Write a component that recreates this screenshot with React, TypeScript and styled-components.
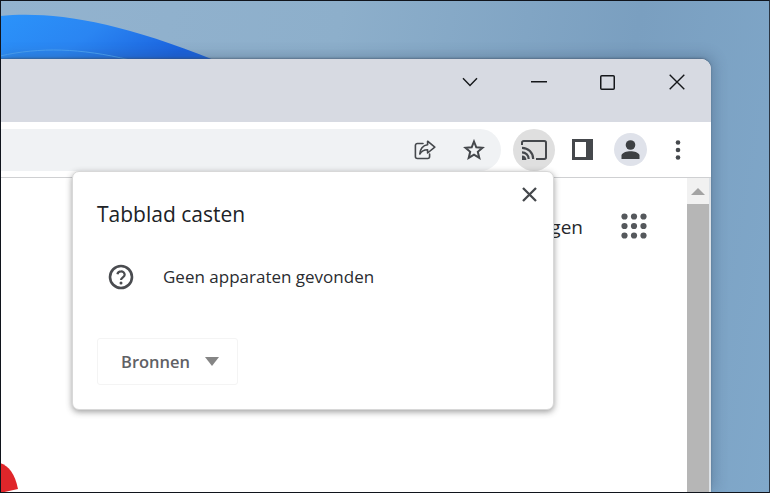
import React from 'react';
import styled, { createGlobalStyle } from 'styled-components';

const GlobalStyle = createGlobalStyle`
  html, body {
    margin: 0;
    padding: 0;
    background: #7fa6c7;
  }
  * {
    box-sizing: border-box;
  }
`;

const Desktop = styled.div`
  position: relative;
  width: 770px;
  height: 493px;
  overflow: hidden;
  padding: 59px 59px 0 0;
  display: flex;
  font-family: 'Open Sans', 'Noto Sans', sans-serif;
  background: linear-gradient(100deg, #93b3cf 0%, #8dafcb 40%, #7a9fc0 75%, #80a8ca 100%);
`;

const Frame = styled.div`
  position: absolute;
  inset: 0;
  border: 1px solid #10141c;
  border-right-color: #2a3644;
  pointer-events: none;
  z-index: 5;
`;

const Swirl = styled.svg`
  position: absolute;
  left: 0;
  top: 0;
`;

const Window = styled.div`
  position: relative;
  flex: 1;
  display: flex;
  flex-direction: column;
  background: #fff;
  border-top-right-radius: 10px;
  overflow: hidden;
`;

const Shadow = styled.div`
  position: absolute;
  left: 0;
  top: 59px;
  width: 711px;
  bottom: 0;
  border-top-right-radius: 10px;
  box-shadow: 3px -3px 14px rgba(50, 70, 100, 0.32), 0 -1px 2px rgba(60, 75, 95, 0.5);
`;

const TitleBar = styled.div`
  height: 63px;
  flex: none;
  display: flex;
  justify-content: flex-end;
  background: #d7dae2;
`;

const CaptionButton = styled.div`
  width: 69px;
  height: 46px;
  display: flex;
  align-items: center;
  justify-content: center;
  color: #15171a;
`;

const Toolbar = styled.div`
  height: 55px;
  flex: none;
  display: flex;
  align-items: center;
  padding-right: 9px;
  background: #fff;
`;

const Omnibox = styled.div`
  flex: 1;
  height: 42px;
  margin-right: 9px;
  display: flex;
  align-items: center;
  justify-content: flex-end;
  gap: 27px;
  padding-right: 16px;
  background: #f0f2f4;
  border-radius: 0 21px 21px 0;
  color: #45484c;
`;

const ToolSlot = styled.div`
  width: 48px;
  height: 42px;
  display: flex;
  align-items: center;
  justify-content: center;
  color: #45484c;
`;

const CastCircle = styled.div`
  width: 42px;
  height: 42px;
  border-radius: 50%;
  display: flex;
  align-items: center;
  justify-content: center;
  background: #dfdfdf;
`;

const Avatar = styled.div`
  width: 33px;
  height: 33px;
  border-radius: 50%;
  display: flex;
  align-items: center;
  justify-content: center;
  background: #dfe2ea;
`;

const Content = styled.div`
  flex: 1;
  min-height: 0;
  display: flex;
  border-top: 1px solid #cfd0d2;
`;

const Page = styled.div`
  flex: 1;
  display: flex;
  align-items: flex-start;
  justify-content: flex-end;
  gap: 40px;
  padding: 35px 40px 0 0;
  background: #fff;
`;

const HeaderLink = styled.span`
  margin: 1px -2px 0 0;
  font-size: 19px;
  line-height: 27px;
  color: #26282b;
`;

const Scrollbar = styled.div`
  width: 24px;
  flex: none;
  display: flex;
  flex-direction: column;
  background: #f1f1f1;
  border-right: 2px solid #dde2e7;
`;

const ScrollArrow = styled.div`
  height: 26px;
  display: flex;
  align-items: center;
  justify-content: center;
  &::before {
    content: '';
    border-left: 7px solid transparent;
    border-right: 7px solid transparent;
    border-bottom: 7px solid #a3a3a3;
  }
`;

const ScrollThumb = styled.div`
  flex: 1;
  background: #b6b6b6;
`;

const Popup = styled.div`
  position: absolute;
  left: 72px;
  top: 112px;
  width: 482px;
  height: 239px;
  z-index: 2;
  padding: 28px 24px 0;
  display: flex;
  flex-direction: column;
  align-items: flex-start;
  background: #fff;
  border: 1px solid #d8d8d8;
  border-radius: 7px;
  box-shadow: 0 2px 6px rgba(40, 40, 40, 0.45);
`;

const CloseButton = styled.div`
  position: absolute;
  top: 12px;
  right: 14px;
  width: 20px;
  height: 20px;
  display: flex;
  align-items: center;
  justify-content: center;
  color: #45484c;
`;

const PopupTitle = styled.div`
  font-size: 21px;
  line-height: 28px;
  color: #202226;
`;

const StatusRow = styled.div`
  display: flex;
  align-items: center;
  gap: 29px;
  margin-top: 36px;
  padding-left: 11px;
`;

const StatusText = styled.span`
  font-size: 17px;
  line-height: 24px;
  color: #2a2c30;
`;

const SourcesButton = styled.div`
  width: 141px;
  height: 47px;
  margin-top: 48px;
  padding: 0 18px 0 23px;
  display: flex;
  align-items: center;
  justify-content: space-between;
  border: 1px solid #f4f4f4;
  border-radius: 3px;
  font-size: 16.5px;
  font-weight: 600;
  color: #5f6165;
  &::after {
    content: '';
    border-left: 7.5px solid transparent;
    border-right: 7.5px solid transparent;
    border-top: 9px solid #858585;
  }
`;

const RedBlob = styled.svg`
  position: absolute;
  left: 0;
  top: 463px;
`;

const Chevron = () => (
  <svg width="16" height="10" viewBox="0 0 16 10" fill="none" stroke="currentColor" strokeWidth="1.4">
    <path d="M1 1.2 8 8.4 15 1.2" />
  </svg>
);

const Minimize = () => (
  <svg width="16" height="2" viewBox="0 0 16 2" fill="currentColor">
    <rect width="16" height="1.5" />
  </svg>
);

const Maximize = () => (
  <svg width="15" height="15" viewBox="0 0 15 15" fill="none" stroke="currentColor" strokeWidth="1.5">
    <rect x="0.75" y="0.75" width="13.5" height="13.5" rx="1" />
  </svg>
);

const CloseLarge = () => (
  <svg width="16" height="16" viewBox="0 0 16 16" fill="none" stroke="currentColor" strokeWidth="1.4">
    <path d="M.7.7 15.3 15.3M15.3.7.7 15.3" />
  </svg>
);

const ShareIcon = () => (
  <svg width="22" height="20" viewBox="0 0 22 20" fill="none" stroke="currentColor" strokeWidth="1.6" strokeLinejoin="round" strokeLinecap="round">
    <path d="M9 3.5H3.4A2 2 0 0 0 1.4 5.5v11a2 2 0 0 0 2 2h10.2a2 2 0 0 0 2-2V14" />
    <path d="M13.6 1.2 20.8 7.2 13.6 13V9.7C10 9.7 7.4 11 5.8 14 6 9.4 8.800 5.200 13.600 4.800Z" />
  </svg>
);

const StarIcon = () => (
  <svg width="22" height="21" viewBox="0 0 22 21" fill="none" stroke="currentColor" strokeWidth="2" strokeLinejoin="miter">
    <path d="M11 2.500 13.300 8.300 19.500 8.800 14.800 12.800 16.300 18.900 11 15.600 5.700 18.900 7.200 12.800 2.500 8.800 8.700 8.300Z" />
  </svg>
);

const CastIcon = () => (
  <svg width="26" height="20" viewBox="0 0 26 20" fill="none" stroke="#45484c">
    <path d="M1 5V2.700A1.700 1.700 0 0 1 2.700 1H23.300A1.700 1.700 0 0 1 25 2.700V17.300A1.700 1.700 0 0 1 23.300 19H15" strokeWidth="2" />
    <path d="M1 7.800A11.200 11.200 0 0 1 12.200 19" strokeWidth="2.200" />
    <path d="M1 12.300A6.700 6.700 0 0 1 7.700 19" strokeWidth="2.200" />
    <path d="M1 15.400V20H5.400A4.400 4.400 0 0 0 1 15.400Z" fill="#45484c" stroke="none" />
  </svg>
);

const SidePanelIcon = () => (
  <svg width="21" height="21" viewBox="0 0 21 21">
    <path fill="#45484c" d="M0 0H21V21H0ZM3 3V18H14V3Z" fillRule="evenodd" />
  </svg>
);

const PersonIcon = () => (
  <svg width="19" height="19" viewBox="0 0 19 19" fill="#3d4043">
    <circle cx="9.500" cy="5" r="4.800" />
    <path d="M0.500 19V15.500C0.500 12.600 6 11.200 9.500 11.200S18.500 12.600 18.500 15.500V19Z" />
  </svg>
);

const DotsIcon = () => (
  <svg width="6" height="20" viewBox="0 0 6 20" fill="#45484c">
    <circle cx="3" cy="2.500" r="2.300" />
    <circle cx="3" cy="10" r="2.300" />
    <circle cx="3" cy="17.500" r="2.300" />
  </svg>
);

const AppsIcon = () => (
  <svg width="26" height="27" viewBox="0 0 26 27" fill="#55585c">
    {[3.500, 13, 22.500].flatMap((y) =>
      [3.500, 13, 22.500].map((x) => <circle key={`${x}-${y}`} cx={x} cy={y} r="3.100" />)
    )}
  </svg>
);

const CloseBold = () => (
  <svg width="15" height="15" viewBox="0 0 15 15" fill="none" stroke="currentColor" strokeWidth="2.300">
    <path d="M1 1 14 14M14 1 1 14" />
  </svg>
);

const HelpIcon = () => (
  <svg width="26" height="26" viewBox="0 0 26 26" fill="none" stroke="#4a4c50" strokeWidth="2.600">
    <circle cx="13" cy="13" r="11" />
    <path d="M9.400 10.200A3.700 3.700 0 0 1 13 7.300 3.600 3.600 0 0 1 16.700 10.700C16.700 13.200 13 13.400 13 16" strokeWidth="2.200" />
    <circle cx="13" cy="19" r="1.500" fill="#4a4c50" stroke="none" />
  </svg>
);

export default function App() {
  return (
    <>
      <GlobalStyle />
      <Desktop>
        <Swirl width="230" height="60" viewBox="0 0 230 60">
          <defs>
            <linearGradient id="swirl" x1="0" y1="0" x2="1" y2="0.300">
              <stop offset="0" stopColor="#2b93fa" />
              <stop offset="0.500" stopColor="#2a85f2" />
              <stop offset="1" stopColor="#1a62de" />
            </linearGradient>
          </defs>
          <path d="M0 16C50 11 115 20 214 60H0Z" fill="url(#swirl)" />
          <path d="M0 56C40 47 80 48 130 60" fill="none" stroke="#4aa3f7" strokeWidth="1" />
        </Swirl>
        <Shadow />
        <Window>
          <TitleBar>
            <CaptionButton><Chevron /></CaptionButton>
            <CaptionButton><Minimize /></CaptionButton>
            <CaptionButton><Maximize /></CaptionButton>
            <CaptionButton><CloseLarge /></CaptionButton>
          </TitleBar>
          <Toolbar>
            <Omnibox>
              <ShareIcon />
              <StarIcon />
            </Omnibox>
            <ToolSlot>
              <CastCircle><CastIcon /></CastCircle>
            </ToolSlot>
            <ToolSlot><SidePanelIcon /></ToolSlot>
            <ToolSlot>
              <Avatar><PersonIcon /></Avatar>
            </ToolSlot>
            <ToolSlot><DotsIcon /></ToolSlot>
          </Toolbar>
          <Content>
            <Page>
              <HeaderLink>Afbeeldingen</HeaderLink>
              <AppsIcon />
            </Page>
            <Scrollbar>
              <ScrollArrow />
              <ScrollThumb />
            </Scrollbar>
          </Content>
          <Popup>
            <CloseButton><CloseBold /></CloseButton>
            <PopupTitle>Tabblad casten</PopupTitle>
            <StatusRow>
              <HelpIcon />
              <StatusText>Geen apparaten gevonden</StatusText>
            </StatusRow>
            <SourcesButton>Bronnen</SourcesButton>
          </Popup>
        </Window>
        <RedBlob width="20" height="30" viewBox="0 0 20 30">
          <path d="M0 0C9 3 15 11 18 26L0 30Z" fill="#e0262a" />
        </RedBlob>
        <Frame />
      </Desktop>
    </>
  );
}
